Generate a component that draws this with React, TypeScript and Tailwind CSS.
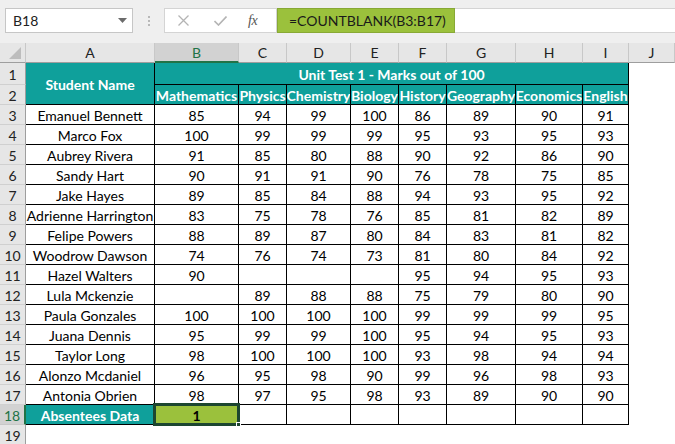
import React from "react";

const rows: [string, string[]][] = [
  ["Emanuel Bennett", ["85", "94", "99", "100", "86", "89", "90", "91"]],
  ["Marco Fox", ["100", "99", "99", "99", "95", "93", "95", "93"]],
  ["Aubrey Rivera", ["91", "85", "80", "88", "90", "92", "86", "90"]],
  ["Sandy Hart", ["90", "91", "91", "90", "76", "78", "75", "85"]],
  ["Jake Hayes", ["89", "85", "84", "88", "94", "93", "95", "92"]],
  ["Adrienne Harrington", ["83", "75", "78", "76", "85", "81", "82", "89"]],
  ["Felipe Powers", ["88", "89", "87", "80", "84", "83", "81", "82"]],
  ["Woodrow Dawson", ["74", "76", "74", "73", "81", "80", "84", "92"]],
  ["Hazel Walters", ["90", "", "", "", "95", "94", "95", "93"]],
  ["Lula Mckenzie", ["", "89", "88", "88", "75", "79", "80", "90"]],
  ["Paula Gonzales", ["100", "100", "100", "100", "99", "99", "99", "95"]],
  ["Juana Dennis", ["95", "99", "99", "100", "95", "94", "95", "93"]],
  ["Taylor Long", ["98", "100", "100", "100", "93", "98", "94", "94"]],
  ["Alonzo Mcdaniel", ["96", "95", "98", "90", "99", "96", "98", "93"]],
  ["Antonia Obrien", ["98", "97", "95", "98", "93", "89", "90", "90"]],
];

const subjects = ["Mathematics", "Physics", "Chemistry", "Biology", "History", "Geography", "Economics", "English"];
const cols = ["A", "B", "C", "D", "E", "F", "G", "H", "I", "J"];

function RowHdr({ n, sel }: { n: number; sel?: boolean }) {
  return (
    <div
      className={
        sel
          ? "flex items-center justify-center pt-[1px] bg-[#d2d2d2] text-[#217346] border-r-2 border-r-[#217346] border-b border-b-[#c8c8c8]"
          : "flex items-center justify-center pt-[1px] bg-[#e6e6e6] text-[#222] border-r border-r-[#9e9e9e] border-b border-b-[#d0d0d0]"
      }
    >
      {n}
    </div>
  );
}

function Cell({ children }: { children?: React.ReactNode }) {
  return (
    <div className="flex items-center justify-center pt-[2px] whitespace-nowrap overflow-hidden border-r border-b border-black text-black">
      {children}
    </div>
  );
}

export default function App() {
  return (
    <div className="w-[675px] h-[444px] overflow-hidden bg-white font-['Lato',sans-serif] text-[14px] text-black">
      {/* Formula bar */}
      <div className="h-[43px] bg-[#efefef] flex items-start pt-[8px] pl-[5px]">
        <div className="w-[128px] h-[25px] bg-white border border-[#c6c6c6] flex items-center justify-between pl-[7px] pr-[5px]">
          <span className="text-[14px] text-[#222]">B18</span>
          <svg width="9" height="5" viewBox="0 0 9 5">
            <path d="M0 0 L9 0 L4.5 5 Z" fill="#6b6b6b" />
          </svg>
        </div>
        <div className="w-[31px] h-[25px] flex flex-col items-center justify-center gap-[2px]">
          <div className="w-[2px] h-[2px] bg-[#b8b8b8]" />
          <div className="w-[2px] h-[2px] bg-[#b8b8b8]" />
          <div className="w-[2px] h-[2px] bg-[#b8b8b8]" />
        </div>
        <div className="w-[113px] h-[25px] bg-white border border-[#d4d4d4] flex items-center pl-[13px]">
          <svg width="11" height="11" viewBox="0 0 11 11">
            <path d="M0.5 0.5 L10.5 10.5 M10.5 0.5 L0.5 10.5" stroke="#b4b4b4" strokeWidth="1.3" />
          </svg>
          <svg className="ml-[25px]" width="13" height="10" viewBox="0 0 13 10">
            <path d="M0.5 5 L4.5 9 L12.5 0.5" stroke="#b4b4b4" strokeWidth="1.6" fill="none" />
          </svg>
          <span className="ml-[21px] italic font-['Liberation_Serif',serif] text-[14px] text-[#555] tracking-[-0.5px]">fx</span>
        </div>
        <div className="w-[178px] h-[25px] bg-[#9bc13c] border border-[#88a935] flex items-center pl-[11px] text-[14px] text-[#1a1a1a]">
          =COUNTBLANK(B3:B17)
        </div>
        <div className="flex-1 h-[25px] bg-white border-y border-[#d4d4d4]" />
      </div>

      {/* Sheet */}
      <div className="grid grid-cols-[26px_129px_84px_48px_64px_48px_48px_69px_67px_46px_46px] grid-rows-[20px_22px_repeat(18,20px)]">
        {/* column headers */}
        <div className="relative bg-[#e6e6e6] border-r border-[#c8c8c8] border-b border-b-[#9e9e9e]">
          <svg className="absolute right-[4px] bottom-[3px]" width="12" height="12" viewBox="0 0 12 12">
            <path d="M12 0 L12 12 L0 12 Z" fill="#bdbdbd" />
          </svg>
        </div>
        {cols.map((c) =>
          c === "B" ? (
            <div key={c} className="flex items-center justify-center bg-[#d2d2d2] text-[#217346] border-r border-[#c8c8c8] border-b-2 border-b-[#217346]">
              {c}
            </div>
          ) : (
            <div key={c} className="flex items-center justify-center bg-[#e6e6e6] text-[#222] border-r border-[#c8c8c8] border-b border-b-[#9e9e9e]">
              {c}
            </div>
          )
        )}

        {/* row 1 */}
        <RowHdr n={1} />
        <div className="row-span-2 flex items-center justify-center bg-[#0fa09b] text-white font-bold border-r border-b border-black pt-[2px]">
          Student Name
        </div>
        <div className="col-span-8 flex items-center justify-center bg-[#0fa09b] text-white font-bold border-r border-b border-black pt-[2px]">
          Unit Test 1 - Marks out of 100
        </div>
        <div />

        {/* row 2 */}
        <RowHdr n={2} />
        {subjects.map((s) => (
          <div key={s} className="flex items-center justify-center bg-[#0fa09b] text-white font-bold border-r border-b border-black whitespace-nowrap overflow-hidden pt-[2px]">
            {s}
          </div>
        ))}
        <div />

        {/* data rows */}
        {rows.map(([name, vals], i) => (
          <React.Fragment key={name}>
            <RowHdr n={i + 3} />
            <Cell>{name}</Cell>
            {vals.map((v, j) => (
              <Cell key={j}>{v}</Cell>
            ))}
            <div />
          </React.Fragment>
        ))}

        {/* row 18 */}
        <RowHdr n={18} sel />
        <div className="flex items-center justify-center pt-[2px] bg-[#0fa09b] text-white font-bold border-r border-b border-black">
          Absentees Data
        </div>
        <div className="relative flex items-center justify-center pt-[2px] bg-[#9bc13c] text-black font-bold border-r border-b border-black">
          1
          <div className="absolute top-[-2px] left-[-2px] right-[-2px] bottom-[-2px] border-[3px] border-[#1c4630]" />
          <div className="absolute right-[-3px] bottom-[-3px] w-[5px] h-[5px] bg-[#1c4630] border border-white" />
        </div>
        {[0, 1, 2, 3, 4, 5, 6].map((k) => (
          <Cell key={k} />
        ))}
        <div />

        {/* row 19 */}
        <RowHdr n={19} />
        {cols.map((c) => (
          <div key={c} />
        ))}
      </div>
    </div>
  );
}
